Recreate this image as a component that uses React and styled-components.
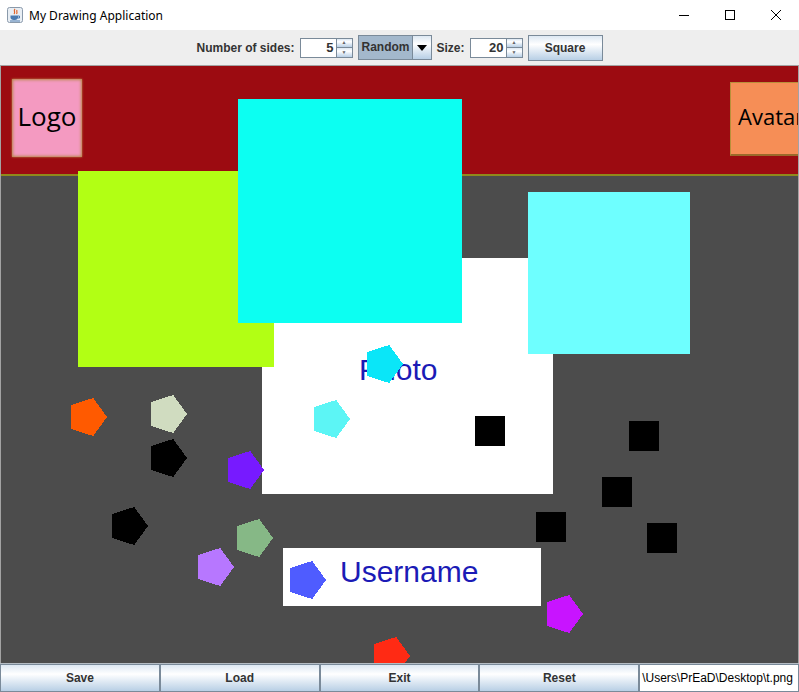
import React from 'react';
import styled, { createGlobalStyle } from 'styled-components';

const GlobalStyle = createGlobalStyle`
  html, body {
    margin: 0;
    padding: 0;
    background: #ffffff;
  }
  * {
    box-sizing: border-box;
  }
`;

const metalGradient = `linear-gradient(180deg, #dde8f3 0%, #ffffff 35%, #e3ecf5 60%, #b8cfe5 100%)`;

const Window = styled.div`
  width: 799px;
  height: 692px;
  display: flex;
  flex-direction: column;
  overflow: hidden;
  font-family: 'Liberation Sans', Arial, sans-serif;
`;

const TitleBar = styled.div`
  height: 30px;
  flex: 0 0 30px;
  display: flex;
  align-items: center;
  background: #ffffff;
  padding-left: 7px;
`;

const TitleText = styled.span`
  margin-left: 6px;
  font-family: 'Noto Sans', 'Open Sans', sans-serif;
  font-size: 12px;
  color: #000000;
`;

const WindowControls = styled.div`
  margin-left: auto;
  display: flex;
  height: 100%;
`;

const ControlButton = styled.div`
  width: 46px;
  height: 100%;
  display: flex;
  align-items: center;
  justify-content: center;
`;

const Toolbar = styled.div`
  height: 35px;
  flex: 0 0 35px;
  background: #eeeeee;
  display: flex;
  align-items: center;
  justify-content: center;
  gap: 5px;
`;

const Label = styled.span`
  font-size: 12px;
  font-weight: bold;
  color: #333333;
`;

const Spinner = styled.div`
  width: 53px;
  height: 20px;
  display: flex;
  border: 1px solid #7a8a99;
  background: #ffffff;
`;

const SpinnerField = styled.div`
  flex: 1;
  font-size: 13px;
  font-weight: bold;
  color: #333333;
  text-align: right;
  padding-right: 2px;
  line-height: 18px;
`;

const SpinnerArrows = styled.div`
  width: 16px;
  display: flex;
  flex-direction: column;
  border-left: 1px solid #7a8a99;
`;

const SpinnerArrow = styled.div`
  flex: 1;
  display: flex;
  align-items: center;
  justify-content: center;
  background: ${metalGradient};
  border-top: ${({ $down }) => ($down ? '1px solid #7a8a99' : 'none')};
  font-size: 5px;
  color: #666666;
  line-height: 1;
`;

const Combo = styled.div`
  width: 74px;
  height: 25px;
  display: flex;
  border: 1px solid #7a8a99;
`;

const ComboValue = styled.div`
  flex: 1;
  background: #a3b8cc;
  font-size: 12px;
  font-weight: bold;
  color: #333333;
  line-height: 23px;
  padding-left: 3px;
  border-right: 1px solid #7a8a99;
`;

const ComboArrow = styled.div`
  width: 18px;
  display: flex;
  align-items: center;
  justify-content: center;
  background: ${metalGradient};
`;

const MetalButton = styled.button`
  width: ${({ $w }) => ($w ? `${$w}px` : 'auto')};
  height: ${({ $h }) => $h || 26}px;
  border: 1px solid #7a8a99;
  background: ${metalGradient};
  font-family: 'Liberation Sans', Arial, sans-serif;
  font-size: 12px;
  font-weight: bold;
  color: #333333;
  padding: 0;
  margin: 0;
  cursor: default;
`;

const Canvas = styled.div`
  position: relative;
  flex: 1;
  background: #4c4c4c;
  border-top: 1px solid #a3a3a3;
  border-left: 1px solid #a3a3a3;
  border-right: 1px solid #a3a3a3;
  overflow: hidden;
`;

const Header = styled.div`
  height: 110px;
  background: #9c0b11;
  border-bottom: 2px solid #8f8a1c;
  display: flex;
  align-items: flex-start;
`;

const LogoBox = styled.div`
  width: 70px;
  height: 78px;
  margin: 13px 0 0 11px;
  padding-bottom: 5px;
  background: #f49ac1;
  box-shadow: inset 0 0 3px 1px #b8884a, 0 0 2px #b8884a;
  display: flex;
  align-items: center;
  justify-content: center;
  font-family: 'Open Sans', 'Noto Sans', sans-serif;
  font-size: 26px;
  color: #000000;
`;

const AvatarBox = styled.div`
  width: 80px;
  height: 74px;
  margin: 16px -12px 0 auto;
  padding: 0 0 5px 7px;
  background: #f68e56;
  border-top: 1px solid #b8903a;
  border-left: 1px solid #b8903a;
  border-bottom: 2px solid #9a6a2a;
  display: flex;
  align-items: center;
  font-family: 'Open Sans', 'Noto Sans', sans-serif;
  font-size: 22px;
  color: #000000;
  white-space: nowrap;
`;

const Rect = styled.div`
  position: absolute;
  left: ${({ $x }) => $x}px;
  top: ${({ $y }) => $y}px;
  width: ${({ $w }) => $w}px;
  height: ${({ $h }) => $h}px;
  background: ${({ $color }) => $color};
`;

const TextPanel = styled(Rect)`
  padding: ${({ $pt }) => $pt}px 0 0 ${({ $pl }) => $pl}px;
  font-family: 'Liberation Sans', Arial, sans-serif;
  font-size: 30px;
  line-height: 30px;
  color: #1b1bb6;
`;

const PentagonSvg = styled.svg`
  position: absolute;
  left: ${({ $cx }) => $cx - 20}px;
  top: ${({ $cy }) => $cy - 20}px;
  width: 41px;
  height: 41px;
  overflow: visible;
`;

const BottomBar = styled.div`
  height: 29px;
  flex: 0 0 29px;
  display: grid;
  grid-template-columns: repeat(5, 1fr);
  border-top: 1px solid #b4bcc4;
  background: #eeeeee;
`;

const PathField = styled.div`
  border: 1px solid #7a8a99;
  background: #ffffff;
  font-size: 12px;
  color: #000000;
  line-height: 26px;
  padding-left: 2px;
  white-space: nowrap;
  overflow: hidden;
`;

const pentagonPoints = Array.from({ length: 5 }, (_, i) => {
  const a = (i * 2 * Math.PI) / 5;
  return `${(20 + 20 * Math.cos(a)).toFixed(2)},${(20 + 20 * Math.sin(a)).toFixed(2)}`;
}).join(' ');

const Pentagon = ({ cx, cy, color }) => (
  <PentagonSvg $cx={cx} $cy={cy} viewBox="0 0 41 41">
    <polygon points={pentagonPoints} fill={color} shapeRendering="crispEdges" />
  </PentagonSvg>
);

const pentagons = [
  { cx: 86, cy: 351, color: '#ff5a00' },
  { cx: 166, cy: 348, color: '#d0dcc0' },
  { cx: 166, cy: 392, color: '#000000' },
  { cx: 243, cy: 404, color: '#771aff' },
  { cx: 127, cy: 460, color: '#000000' },
  { cx: 252, cy: 472, color: '#86b886' },
  { cx: 213, cy: 501, color: '#b777ff' },
  { cx: 382, cy: 298, color: '#0ae6f8' },
  { cx: 329, cy: 353, color: '#5cf5f5' },
  { cx: 305, cy: 514, color: '#4f5cff' },
  { cx: 562, cy: 548, color: '#c814ff' },
  { cx: 389, cy: 590, color: '#ff2a14' },
];

const squares = [
  [474, 350],
  [628, 355],
  [601, 411],
  [535, 446],
  [646, 457],
];

const JavaIcon = () => (
  <svg width="16" height="16" viewBox="0 0 16 16">
    <rect x="0.5" y="0.5" width="15" height="15" rx="2" fill="#e8eef4" stroke="#8a9aab" />
    <path d="M8 2 C6 4 9 5 7 7 M10 3 C9 5 11 5 9.5 7" stroke="#e0642a" strokeWidth="1.2" fill="none" />
    <path d="M3.5 8.5 H11 V10.5 C11 12 9.5 13 8 13 H6.5 C5 13 3.5 12 3.5 10.5 Z" fill="#4a7ab0" />
    <path d="M11 9 H12.5 V11 H11" stroke="#4a7ab0" fill="none" />
    <rect x="3" y="13.5" width="10" height="1" fill="#4a7ab0" />
  </svg>
);

const Spin = ({ value }) => (
  <Spinner>
    <SpinnerField>{value}</SpinnerField>
    <SpinnerArrows>
      <SpinnerArrow>▲</SpinnerArrow>
      <SpinnerArrow $down>▼</SpinnerArrow>
    </SpinnerArrows>
  </Spinner>
);

export default function App() {
  return (
    <Window>
      <GlobalStyle />
      <TitleBar>
        <JavaIcon />
        <TitleText>My Drawing Application</TitleText>
        <WindowControls>
          <ControlButton>
            <svg width="12" height="12" viewBox="0 0 12 12">
              <path d="M1 6.5 H11" stroke="#000" strokeWidth="1" />
            </svg>
          </ControlButton>
          <ControlButton>
            <svg width="12" height="12" viewBox="0 0 12 12">
              <rect x="1.5" y="1.5" width="9" height="9" stroke="#000" fill="none" />
            </svg>
          </ControlButton>
          <ControlButton>
            <svg width="12" height="12" viewBox="0 0 12 12">
              <path d="M1 1 L11 11 M11 1 L1 11" stroke="#000" strokeWidth="1" />
            </svg>
          </ControlButton>
        </WindowControls>
      </TitleBar>

      <Toolbar>
        <Label>Number of sides:</Label>
        <Spin value="5" />
        <Combo>
          <ComboValue>Random</ComboValue>
          <ComboArrow>
            <svg width="10" height="6" viewBox="0 0 10 6">
              <path d="M0 0 H10 L5 6 Z" fill="#000" />
            </svg>
          </ComboArrow>
        </Combo>
        <Label>Size:</Label>
        <Spin value="20" />
        <MetalButton $w={75}>Square</MetalButton>
      </Toolbar>

      <Canvas>
        <Header>
          <LogoBox>Logo</LogoBox>
          <AvatarBox>Avatar</AvatarBox>
        </Header>
        <TextPanel $x={261} $y={192} $w={291} $h={236} $color="#ffffff" $pt={97} $pl={97}>
          Photo
        </TextPanel>
        <Rect $x={77} $y={105} $w={196} $h={196} $color="#b2ff14" />
        <Rect $x={237} $y={33} $w={224} $h={224} $color="#0cfff2" />
        <Rect $x={527} $y={126} $w={162} $h={162} $color="#6effff" />
        <TextPanel $x={282} $y={482} $w={258} $h={58} $color="#ffffff" $pt={9} $pl={57}>
          Username
        </TextPanel>
        {squares.map(([x, y]) => (
          <Rect key={`${x}-${y}`} $x={x} $y={y} $w={30} $h={30} $color="#000000" />
        ))}
        {pentagons.map((p) => (
          <Pentagon key={`${p.cx}-${p.cy}`} {...p} />
        ))}
      </Canvas>

      <BottomBar>
        <MetalButton $h={28}>Save</MetalButton>
        <MetalButton $h={28}>Load</MetalButton>
        <MetalButton $h={28}>Exit</MetalButton>
        <MetalButton $h={28}>Reset</MetalButton>
        <PathField>\Users\PrEaD\Desktop\t.png</PathField>
      </BottomBar>
    </Window>
  );
}
